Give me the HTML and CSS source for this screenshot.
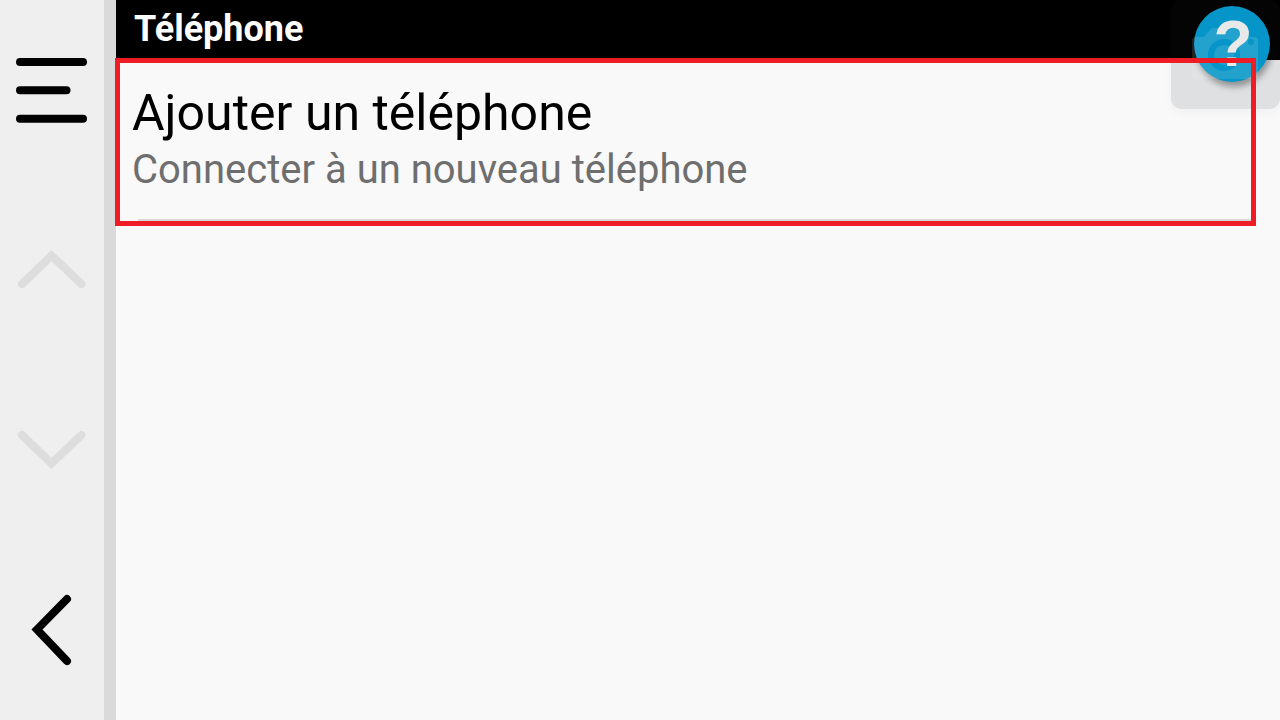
FILE: index.html
```html
<!DOCTYPE html>
<html lang="fr">
<head>
    <meta charset="UTF-8">
    <meta name="viewport" content="width=device-width, initial-scale=1.0">
    <title>Téléphone</title>
    <link rel="stylesheet" href="styles.css">
</head>
<body>
    <nav class="sidebar">
        <button type="button" class="nav-btn" aria-label="Menu">
            <svg width="72" height="68" viewBox="0 0 72 68">
                <path d="M4 6H67M4 34.300H50.500M4 62.700H67"/>
            </svg>
        </button>
        <button type="button" class="nav-btn" aria-label="Monter" disabled>
            <svg width="72" height="44" viewBox="0 0 72 44">
                <path d="M6 36L35.500 7.500L65.500 36"/>
            </svg>
        </button>
        <button type="button" class="nav-btn" aria-label="Descendre" disabled>
            <svg width="72" height="44" viewBox="0 0 72 44">
                <path d="M6 7L35.500 35.500L65.500 7"/>
            </svg>
        </button>
        <button type="button" class="nav-btn" aria-label="Retour">
            <svg width="44" height="72" viewBox="0 0 44 72">
                <path d="M37 5L7 35.500L37 67"/>
            </svg>
        </button>
    </nav>

    <main class="content">
        <header class="title-bar">
            <h1>Téléphone</h1>
        </header>
        <div class="list">
            <button type="button" class="list-item">
                <span class="item-title">Ajouter un téléphone</span>
                <span class="item-text">Connecter à un nouveau téléphone</span>
            </button>
            <div class="highlight"></div>
        </div>
    </main>

    <button type="button" class="help" aria-label="Aide">
        <span class="help-circle">
            <svg class="camera" width="66" height="52" viewBox="0 0 66 52">
                <path fill-rule="evenodd" d="M4 9H12L18 2Q19 0 22 0H43Q46 0 47 2L53 9H62Q66 9 66 13V47Q66 51 62 51H4Q0 51 0 47V13Q0 9 4 9ZM32 11A16 16 0 1 0 32 43A16 16 0 1 0 32 11ZM59 11A3 3 0 1 0 59 17A3 3 0 1 0 59 11Z"/>
                <circle cx="32" cy="27" r="10"/>
            </svg>
            <span class="help-mark">?</span>
        </span>
    </button>
</body>
</html>
```

FILE: styles.css
```css
* {
    box-sizing: border-box;
}
body {
    margin: 0;
    min-height: 100vh;
    display: flex;
    position: relative;
    font-family: Roboto, sans-serif;
    background-color: #f9f9f9;
}
button {
    border: none;
    padding: 0;
    background: none;
    font-family: inherit;
    cursor: pointer;
}

/* left navigation */
.sidebar {
    display: flex;
    flex-direction: column;
    flex: 0 0 116px;
    background-color: #efefef;
    border-right: 12px solid #dadada;
}
.nav-btn {
    flex: 1;
    display: flex;
    align-items: center;
    justify-content: center;
    color: #000;
}
.nav-btn:disabled {
    color: #dddddd;
    cursor: default;
}
.nav-btn svg {
    fill: none;
    stroke: currentColor;
    stroke-width: 8;
    stroke-linecap: round;
}

/* page */
.content {
    flex: 1;
}
.title-bar {
    height: 60px;
    padding: 6px 18px;
    background-color: #000;
    color: #fff;
}
.title-bar h1 {
    margin: 0;
    font-size: 36px;
    line-height: 46px;
    font-weight: bold;
}
.list {
    position: relative;
    padding-right: 24px;
}
.list-item {
    display: block;
    width: 100%;
    padding: 24px 16px;
    text-align: left;
    background: linear-gradient(#d6d8da, #d6d8da) 22px 100% / 100% 2px no-repeat;
}
.item-title,
.item-text {
    display: block;
}
.item-title {
    font-size: 50px;
    line-height: 58px;
    color: #000;
}
.item-text {
    font-size: 40px;
    line-height: 55px;
    color: #6e6e6e;
}
.highlight {
    position: absolute;
    top: -2px;
    right: 24px;
    bottom: -5px;
    left: -1px;
    z-index: 2;
    border: 5px solid #ee1c25;
    pointer-events: none;
}

/* floating help button */
.help {
    position: absolute;
    top: 0;
    right: 0;
    z-index: 1;
    width: 109px;
    height: 109px;
    padding: 6px 10px 27px 23px;
    border-radius: 10px;
    background: linear-gradient(#040404 60px, #dfe0e2 60px);
    box-shadow: 0 4px 10px rgba(0, 0, 0, 0.03);
}
.help-circle {
    position: relative;
    display: block;
    width: 76px;
    height: 76px;
    border-radius: 50%;
    background-color: #0595c8;
    box-shadow: 2px 5px 6px rgba(0, 0, 0, 0.35);
}
.camera {
    position: absolute;
    top: 22px;
    left: -2px;
    fill: #fff;
    opacity: 0.12;
}
.help-mark {
    position: relative;
    display: block;
    padding-left: 2px;
    font-family: "Liberation Sans", sans-serif;
    font-size: 64px;
    line-height: 76px;
    font-weight: bold;
    text-align: center;
    color: #e9e9e9;
}
```
